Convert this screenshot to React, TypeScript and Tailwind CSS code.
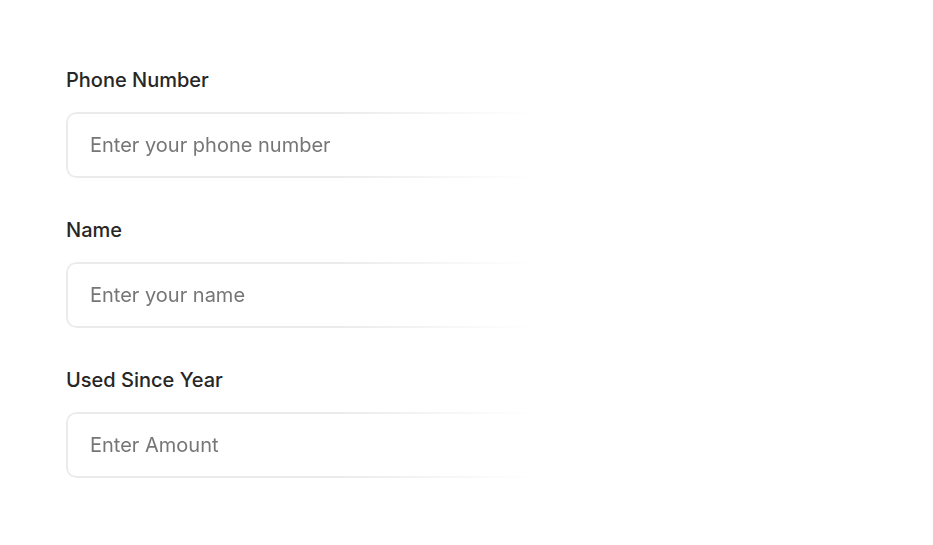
const fields = [
  { label: 'Phone Number', placeholder: 'Enter your phone number' },
  { label: 'Name', placeholder: 'Enter your name' },
  { label: 'Used Since Year', placeholder: 'Enter Amount' },
];

export default function App() {
  return (
    <div className="min-h-screen w-full bg-white font-['Inter',sans-serif]">
      <div className="flex flex-col gap-[40px] pl-[66px] pr-[62px] pt-[68px]">
        {fields.map((f) => (
          <div key={f.label} className="flex flex-col gap-[20px]">
            <label className="text-[20px] leading-[24px] font-medium text-[#262626]">{f.label}</label>
            <div className="h-[66px] w-full rounded-[10px] border-2 border-[#ebebeb] bg-white [mask-image:linear-gradient(to_right,black_34%,transparent_58%)]">
              <input
                className="h-full w-full bg-transparent px-[22px] text-[20px] text-[#333] outline-none placeholder:text-[#767676]"
                placeholder={f.placeholder}
              />
            </div>
          </div>
        ))}
      </div>
    </div>
  );
}
